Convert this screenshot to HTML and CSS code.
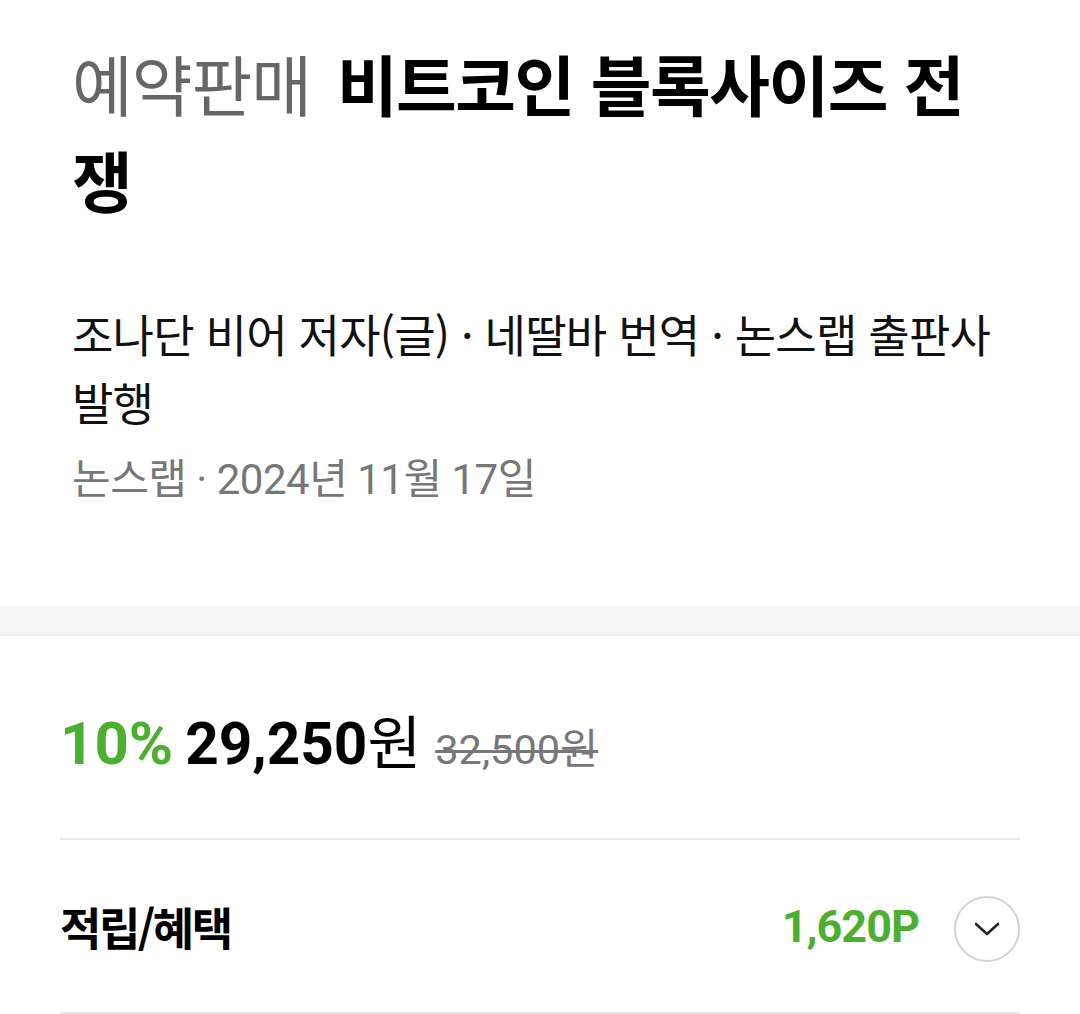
FILE: index.html
```html
<!DOCTYPE html>
<html lang="ko">
<head>
<meta charset="utf-8">
<link rel="stylesheet" href="styles.css">
</head>
<body>
<div class="page">
  <section class="info">
    <h1 class="title"><span class="badge">예약판매</span>비트코인 블록사이즈 전쟁</h1>
    <p class="authors">조나단 비어 저자(글) · 네딸바 번역 · 논스랩 출판사 발행</p>
    <p class="pub">논스랩 · 2024년 11월 17일</p>
  </section>
  <div class="band"></div>
  <section class="price-sec">
    <div class="price"><span class="rate">10%</span><span class="sale">29,250<span class="won">원</span></span><span class="orig">32,500원</span></div>
    <div class="row">
      <span class="label">적립/혜택</span>
      <span class="points">1,620P</span>
      <span class="toggle">
        <svg width="28" height="16" viewBox="0 0 28 16"><path d="M3 3 L14 13 L25 3" fill="none" stroke="#222" stroke-width="2.6" stroke-linecap="round" stroke-linejoin="round"/></svg>
      </span>
    </div>
  </section>
</div>
</body>
</html>
```

FILE: styles.css
```css
* { box-sizing: border-box; }
html, body { margin: 0; padding: 0; background: #fff; }
body {
  font-family: "Roboto", "Noto Sans CJK KR", sans-serif;
  color: #111;
}
.page { width: 1080px; }
.info { padding: 34px 72px 96px 72px; }
.title {
  margin: 0;
  font-family: "Noto Sans CJK KR", sans-serif;
  font-size: 66px;
  line-height: 96px;
  letter-spacing: -1.5px;
  font-weight: 700;
  color: #000;
}
.badge { font-weight: 400; color: #666; margin-right: 26px; letter-spacing: -1px; }
.authors {
  margin: 74px 0 0;
  font-family: "Noto Sans CJK KR", sans-serif;
  font-size: 45px;
  line-height: 68px;
  letter-spacing: -0.8px;
  color: #111;
}
.pub {
  margin: 14px 0 0;
  font-family: "Roboto", "Noto Sans CJK KR", sans-serif;
  font-size: 42px;
  line-height: 60px;
  letter-spacing: -0.5px;
  color: #777;
}
.band {
  height: 30px;
  background: #f6f6f6;
  border-bottom: 2px solid #efefef;
}
.price-sec { padding: 68px 60px 0; }
.price {
  line-height: 80px;
  padding-bottom: 39px;
  border-bottom: 2px solid #e9e9e9;
  white-space: nowrap;
}
.rate { color: #4caf2f; font-weight: 700; font-size: 60px; margin-right: 12px; }
.sale { color: #000; font-weight: 700; font-size: 58.5px; margin-right: 14px; }
.won { font-weight: 400; }
.orig {
  color: #777;
  font-size: 41.5px;
  text-decoration: line-through;
  text-decoration-thickness: 3px;
}
.row {
  display: flex;
  align-items: center;
  height: 174px;
  border-bottom: 2px solid #e9e9e9;
}
.label {
  font-family: "Noto Sans CJK KR", sans-serif;
  font-weight: 700;
  font-size: 45px;
  letter-spacing: -2.5px;
  color: #000;
  flex: 1;
}
.points {
  color: #4caf2f;
  font-weight: 700;
  font-size: 45px;
  letter-spacing: -1px;
  margin-right: 35px;
}
.toggle {
  width: 66px;
  height: 66px;
  border: 2px solid #d2d2d2;
  border-radius: 50%;
  display: flex;
  align-items: center;
  justify-content: center;
  margin-top: 6px;
}
```
